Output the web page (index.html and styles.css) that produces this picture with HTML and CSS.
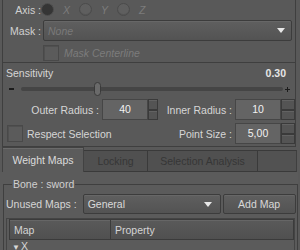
FILE: index.html
```html
<!DOCTYPE html>
<html lang="en">
<head>
  <meta charset="UTF-8">
  <title>Weight Map Brush</title>
  <link rel="stylesheet" href="styles.css">
</head>
<body>

  <div class="panel">

    <!-- Brush options -->
    <div class="tool-box">
      <div class="axis-group">
        <div class="axis-row">
          <span class="lbl">Axis :</span>
          <span class="radio-item"><span class="radio checked"></span><span class="opt">X</span></span>
          <span class="radio-item"><span class="radio"></span><span class="opt">Y</span></span>
          <span class="radio-item"><span class="radio"></span><span class="opt">Z</span></span>
        </div>
        <div class="mask-row">
          <span class="lbl">Mask :</span>
          <div class="combo mask-combo disabled"><span>None</span><span class="arrow"></span></div>
        </div>
        <div class="centerline-row">
          <span class="check"></span><span class="opt">Mask Centerline</span>
        </div>
      </div>

      <div class="sens-head">
        <span>Sensitivity</span>
        <span class="value">0.30</span>
      </div>
      <div class="slider">
        <span class="minus"></span>
        <div class="track"><span class="handle"></span></div>
        <span class="plus"></span>
      </div>

      <div class="fields">
        <span class="flabel">Outer Radius :</span>
        <div class="num">40</div>
        <div class="spin"><span></span><span></span></div>
        <span class="flabel">Inner Radius :</span>
        <div class="num">10</div>
        <div class="spin"><span></span><span></span></div>

        <div class="respect"><span class="check"></span>Respect Selection</div>
        <span class="flabel">Point Size :</span>
        <div class="num">5,00</div>
        <div class="spin"><span></span><span></span></div>
      </div>
    </div>

    <!-- Tabs -->
    <div class="tabs">
      <span class="tab active">Weight Maps</span>
      <span class="tab locking">Locking</span>
      <span class="tab analysis">Selection Analysis</span>
      <span class="tab-fill"></span>
    </div>

    <div class="pane">
      <fieldset class="bone">
        <legend>Bone : sword</legend>
        <div class="maps-row">
          <span class="maps-label">Unused Maps :</span>
          <div class="combo maps-combo"><span>General</span><span class="arrow"></span></div>
          <button class="add-btn">Add Map</button>
        </div>
        <div class="table">
          <div class="thead">
            <span class="th map-col">Map</span>
            <span class="th prop-col">Property</span>
          </div>
          <div class="tree-row"><span class="caret">&#9660;</span>X</div>
        </div>
      </fieldset>
    </div>

  </div>

</body>
</html>
```

FILE: styles.css
```css
* {
  box-sizing: border-box;
}

body {
  margin: 0;
  background: #595959;
  font-family: "Liberation Sans", Arial, sans-serif;
  font-size: 10.5px;
  color: #d6d6d6;
}

.panel {
  width: 300px;
  height: 250px;
  overflow: hidden;
}

/* ---- top tool box ---- */
.tool-box {
  margin-left: 2px;
  width: 294px;
  border-left: 1px solid #3f3f3f;
  border-right: 1px solid #3f3f3f;
  border-bottom: 1px solid #3f3f3f;
  padding-bottom: 2px;
}

.axis-group {
  border-bottom: 1px solid #3f3f3f;
  padding-bottom: 1px;
}

.axis-row,
.mask-row,
.centerline-row {
  display: flex;
  align-items: center;
}

.axis-row {
  height: 19px;
}

.mask-row {
  margin-top: 1px;
  height: 21px;
}

.centerline-row {
  margin-top: 4px;
  height: 16px;
  padding-left: 40px;
}

.lbl {
  width: 38px;
  text-align: right;
  color: #d0d0d0;
}

.radio-item {
  display: flex;
  align-items: center;
  width: 38px;
}

.radio-item:first-of-type {
  margin-left: 3px;
}

.radio {
  flex: none;
  width: 13px;
  height: 13px;
  border-radius: 50%;
  background: #5f5f5f;
  border: 1px solid #4b4b4b;
  box-shadow: inset 0 -1px 0 #545454;
  margin-right: 9px;
}

.radio.checked {
  background: #353535;
  border-color: #4e4e4e;
  box-shadow: none;
}

.opt {
  font-style: italic;
  color: #7c7c7c;
}

.check {
  flex: none;
  width: 16px;
  height: 16px;
  background: #5b5b5b;
  border: 1px solid #494949;
  box-shadow: inset 1px 1px 0 #505050;
  margin-right: 5px;
}

/* combo boxes */
.combo {
  display: flex;
  align-items: center;
  justify-content: space-between;
  height: 100%;
  padding: 0 6px 0 4px;
  background: linear-gradient(#5f5f5f, #535353);
  border: 1px solid #3c3c3c;
  border-radius: 2px;
  box-shadow: inset 0 1px 0 #676767;
  color: #dadada;
}

.combo.disabled {
  color: #7a7a7a;
  font-style: italic;
}

.mask-combo {
  margin-left: 2px;
  width: 249px;
}

.arrow {
  width: 0;
  height: 0;
  border-left: 4px solid transparent;
  border-right: 4px solid transparent;
  border-top: 5px solid #e8e8e8;
}

/* sensitivity */
.sens-head {
  display: flex;
  justify-content: space-between;
  height: 18px;
  line-height: 18px;
  margin-top: 1px;
  padding: 0 9px 0 3px;
}

.value {
  font-weight: bold;
  color: #e6e6e6;
}

.slider {
  display: flex;
  align-items: center;
  height: 14px;
  padding: 0 5px 0 6px;
}

.minus {
  width: 5px;
  height: 2px;
  background: #1c1c1c;
}

.track {
  position: relative;
  flex: 1;
  height: 4px;
  margin: 0 2px 0 7px;
  border-radius: 2px;
  background: #454545;
}

.handle {
  position: absolute;
  left: 73px;
  top: -5px;
  width: 7px;
  height: 14px;
  border-radius: 4px;
  background: #6a6a6a;
  border: 1px solid #3a3a3a;
}

.plus {
  width: 5px;
  height: 5px;
  background: linear-gradient(#1c1c1c, #1c1c1c) center / 5px 1px no-repeat,
              linear-gradient(#1c1c1c, #1c1c1c) center / 1px 5px no-repeat;
}

/* number fields */
.fields {
  display: grid;
  grid-template-columns: 99px 46px 10px 77px 46px 14px;
  grid-template-rows: 21px 21px;
  row-gap: 3px;
  margin-top: 3px;
}

.flabel {
  align-self: center;
  text-align: right;
  padding-right: 3px;
}

.num {
  background: #646464;
  border: 1px solid #464646;
  text-align: center;
  line-height: 19px;
  color: #f2f2f2;
}

.spin {
  display: flex;
  flex-direction: column;
}

.spin span {
  flex: 1;
  background: #545454;
  border: 1px solid #3a3a3a;
  box-shadow: inset 0 1px 0 #626262;
}

.respect {
  grid-column: 1 / 4;
  display: flex;
  align-items: center;
  padding-left: 4px;
}

.respect .check {
  margin-right: 4px;
  height: 17px;
}

/* ---- tabs ---- */
.tabs {
  display: flex;
  align-items: flex-end;
  height: 25px;
  padding-left: 2px;
  width: 297px;
}

.tab {
  display: flex;
  align-items: center;
  justify-content: center;
  height: 22px;
  background: #505050;
  border: 1px solid #3a3a3a;
  color: #363636;
}

.tab.active {
  width: 82px;
  height: 25px;
  background: #5b5b5b;
  border-color: #424242;
  border-bottom: none;
  box-shadow: inset 0 1px 0 #6a6a6a;
  color: #dcdcdc;
}

.locking {
  width: 64px;
  border-left: none;
}

.analysis {
  width: 110px;
  border-left: none;
}

.tab-fill {
  flex: 1;
  height: 22px;
  background: #525252;
  border-top: 1px solid #3a3a3a;
  border-right: 1px solid #3f3f3f;
  border-bottom: 1px solid #3a3a3a;
}

/* ---- pane ---- */
.pane {
  height: 78px;
  padding: 6px 0 0 3px;
  width: 298px;
  background: #5b5b5b;
}

.bone {
  margin: 0;
  padding: 4px 1px 0 2px;
  height: 90px;
  border: 1px solid #3f3f3f;
  border-bottom: none;
}

.bone legend {
  margin-left: 6px;
  padding: 0 1px;
  line-height: 12px;
  color: #d0d0d0;
}

.maps-row {
  display: flex;
  align-items: center;
  height: 20px;
}

.maps-label {
  margin-right: 6px;
}

.maps-combo {
  width: 138px;
  padding-right: 8px;
}

.add-btn {
  margin-left: 2px;
  width: 73px;
  height: 20px;
  padding: 0;
  font: inherit;
  color: #d8d8d8;
  background: linear-gradient(#5f5f5f, #535353);
  border: 1px solid #3c3c3c;
  border-radius: 2px;
  box-shadow: inset 0 1px 0 #676767;
}

.table {
  margin-top: 4px;
  margin-right: 1px;
  border: 1px solid #444444;
  border-bottom: none;
  padding-left: 2px;
}

.thead {
  display: flex;
  height: 21px;
}

.th {
  display: flex;
  align-items: center;
  padding-left: 4px;
  background: linear-gradient(#5a5a5a, #505050);
  border: 1px solid #3b3b3b;
  box-shadow: inset 0 1px 0 #666666;
  color: #d4d4d4;
}

.map-col {
  width: 102px;
}

.prop-col {
  flex: 1;
  border-left: none;
}

.tree-row {
  padding: 0 0 0 3px;
  line-height: 12px;
  color: #d8d8d8;
}

.caret {
  font-size: 8px;
  margin-right: 1px;
}
```
